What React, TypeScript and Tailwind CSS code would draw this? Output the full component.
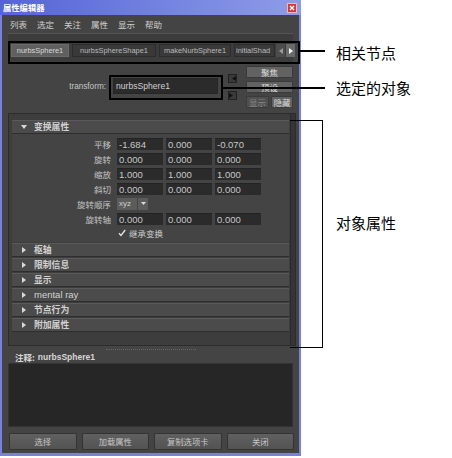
import React from 'react';

const cjk = '"Noto Sans CJK SC", "Liberation Sans", sans-serif';
const latin = '"Liberation Sans", "Noto Sans CJK SC", sans-serif';

const menus = ['列表', '选定', '关注', '属性', '显示', '帮助'];
const tabs = ['nurbsSphere1', 'nurbsSphereShape1', 'makeNurbSphere1', 'initialShad'];

const rows: { label: string; values: string[] }[] = [
  { label: '平移', values: ['-1.684', '0.000', '-0.070'] },
  { label: '旋转', values: ['0.000', '0.000', '0.000'] },
  { label: '缩放', values: ['1.000', '1.000', '1.000'] },
  { label: '斜切', values: ['0.000', '0.000', '0.000'] },
];

const sections = ['枢轴', '限制信息', '显示', 'mental ray', '节点行为', '附加属性'];
const footerButtons = ['选择', '加载属性', '复制选项卡', '关闭'];

function Field({ value }: { value: string }) {
  return (
    <div className="w-[46px] h-[12px] bg-[#2b2b2b] border-t border-[#232323] text-[9.5px] leading-[12px] text-[#c8c8c8] pl-[2px]">
      {value}
    </div>
  );
}

function Label({ text }: { text: string }) {
  return <div className="w-[99px] text-right text-[8.5px] leading-[12px] text-[#c4c4c4]">{text}</div>;
}

function SectionHeader({ title, open, latinText }: { title: string; open?: boolean; latinText?: boolean }) {
  return (
    <div className="h-[14px] flex items-center bg-[#4b4b4b] border-t border-[#5a5a5a] border-b border-b-[#2e2e2e]">
      <div className="w-[22px] flex justify-center pl-[2px]">
        {open ? (
          <svg width="6" height="5" viewBox="0 0 6 5"><path d="M0 0h6L3 4z" fill="#d8d8d8" /></svg>
        ) : (
          <svg width="5" height="6" viewBox="0 0 5 6"><path d="M0 0v6l4-3z" fill="#d8d8d8" /></svg>
        )}
      </div>
      {latinText ? (
        <span className="text-[9.5px] text-[#d2d2d2] leading-none" style={{ fontFamily: latin }}>{title}</span>
      ) : (
        <span className="text-[8.8px] font-bold text-[#d2d2d2] leading-none">{title}</span>
      )}
    </div>
  );
}

function SmallBtn({ text, disabled, className = '' }: { text: string; disabled?: boolean; className?: string }) {
  return (
    <div
      className={`h-[12px] flex items-center justify-center rounded-[1px] border border-[#3a3a3a] text-[8.5px] leading-none ${
        disabled ? 'text-[#858585] bg-[#505050]' : 'text-[#dadada] bg-[#626262]'
      } ${className}`}
    >
      {text}
    </div>
  );
}

export default function App() {
  return (
    <div className="relative w-[452px] h-[458px] bg-white overflow-hidden" style={{ fontFamily: cjk }}>
      {/* window */}
      <div className="w-[301px] h-[456px] flex flex-col bg-[#7880e2]">
        {/* title bar */}
        <div className="h-[15px] flex items-center justify-between bg-gradient-to-r from-[#5663d6] to-[#8e9ce8] pl-[3px] pr-[4px]">
          <span className="text-[8.3px] font-bold text-white leading-none">属性编辑器</span>
          <div className="w-[10px] h-[10px] bg-[#d23a3a] border border-[#f2b8b8] flex items-center justify-center">
            <svg width="6" height="6" viewBox="0 0 6 6"><path d="M1 1l4 4M5 1l-4 4" stroke="white" strokeWidth="1.4" /></svg>
          </div>
        </div>

        {/* body */}
        <div className="flex-1 flex flex-col bg-[#444444] ml-[2px] mr-[2px] mb-[3px]">
          {/* menu */}
          <div className="h-[18px] flex items-center gap-[10px] pl-[8px] text-[8.5px] text-[#cfcfcf]">
            {menus.map(m => (
              <span key={m} className="w-[17px]">{m}</span>
            ))}
          </div>

          {/* tabs */}
          <div className="h-[30px] mx-[6px] bg-[#3c3c3c] border-t border-[#555] flex items-start pt-[10px] pl-[3px]">
            <div className="flex items-center h-[13px] gap-[3px]" style={{ fontFamily: latin }}>
              {tabs.map((t, i) => (
                <div
                  key={t}
                  className={`h-[13px] flex items-center text-[7.4px] leading-none border ${
                    i === 0
                      ? 'bg-[#606060] border-[#6a6a6a] text-[#d8d8d8] w-[58px] justify-center'
                      : 'bg-[#393939] border-[#2c2c2c] text-[#bcbcbc] justify-center'
                  } ${i === 1 ? 'w-[84px]' : ''} ${i === 2 ? 'w-[72px]' : ''} ${i === 3 ? 'w-[41px] overflow-hidden justify-start pl-[1px]' : ''}`}
                >
                  {t}
                </div>
              ))}
              <div className="flex gap-[1px] -ml-[2px]">
                <div className="w-[9px] h-[13px] bg-[#4c4c4c] flex items-center justify-center">
                  <svg width="4" height="6" viewBox="0 0 4 6"><path d="M4 0v6L0 3z" fill="#9a9a9a" /></svg>
                </div>
                <div className="w-[9px] h-[13px] bg-[#6a6a6a] flex items-center justify-center">
                  <svg width="4" height="6" viewBox="0 0 4 6"><path d="M0 0v6l4-3z" fill="#f4f4f4" /></svg>
                </div>
              </div>
            </div>
          </div>

          {/* transform row */}
          <div className="h-[50px] flex">
            <div className="w-[104px] pt-[20px] text-right text-[8.2px] text-[#c4c4c4] leading-none" style={{ fontFamily: latin }}>
              transform:
            </div>
            <div className="ml-[7px] mt-[15px] w-[105px] h-[16px] bg-[#2b2b2b] border border-[#262626] text-[8.6px] text-[#d0d0d0] leading-[14px] pl-[2px]" style={{ fontFamily: latin }}>
              nurbsSphere1
            </div>
            <div className="ml-[10px] pt-[11px] flex flex-col gap-[8px]">
              <div className="w-[9px] h-[9px] bg-[#3a3a3a] border border-[#222] flex items-center justify-end">
                <svg width="5" height="5" viewBox="0 0 5 5"><path d="M5 0v5L1 2.5z" fill="#111" /></svg>
              </div>
              <div className="w-[9px] h-[9px] bg-[#3a3a3a] border border-[#222] flex items-center">
                <svg width="5" height="5" viewBox="0 0 5 5"><path d="M0 0v5l4-2.5z" fill="#111" /></svg>
              </div>
            </div>
            <div className="ml-[9px] pt-[3px] w-[47px] flex flex-col gap-[3px]">
              <SmallBtn text="聚焦" />
              <SmallBtn text="预设" />
              <div className="flex gap-[2px]">
                <SmallBtn text="显示" disabled className="w-[23px]" />
                <SmallBtn text="隐藏" className="w-[22px]" />
              </div>
            </div>
          </div>

          {/* attribute area */}
          <div className="h-[233px] ml-[6px] mr-[3px] border border-[#2c2c2c] bg-[#3d3d3d] flex">
            <div className="flex-1 pl-[3px] pr-[1px] pt-[6px] flex flex-col">
              <SectionHeader title="变换属性" open />
              <div className="bg-[#444] flex flex-col gap-[3px] pt-[4px] pb-[4px]">
                {rows.map(r => (
                  <div key={r.label} className="flex items-center gap-[6px]">
                    <Label text={r.label} />
                    <div className="flex gap-[3px]" style={{ fontFamily: latin }}>
                      {r.values.map((v, i) => (
                        <Field key={i} value={v} />
                      ))}
                    </div>
                  </div>
                ))}
                <div className="flex items-center gap-[6px]">
                  <Label text="旋转顺序" />
                  <div className="flex h-[12px]" style={{ fontFamily: latin }}>
                    <div className="w-[20px] bg-[#5c5c5c] text-[8px] leading-[12px] text-[#d0d0d0] pl-[2px]">xyz</div>
                    <div className="w-[10px] ml-[1px] bg-[#5c5c5c] flex items-center justify-center">
                      <svg width="5" height="4" viewBox="0 0 5 4"><path d="M0 0h5L2.5 3z" fill="#ddd" /></svg>
                    </div>
                  </div>
                </div>
                <div className="flex items-center gap-[6px]">
                  <Label text="旋转轴" />
                  <div className="flex gap-[3px]" style={{ fontFamily: latin }}>
                    <Field value="0.000" />
                    <Field value="0.000" />
                    <Field value="0.000" />
                  </div>
                </div>
                <div className="flex items-center h-[10px] pl-[106px] gap-[3px]">
                  <div className="w-[8px] h-[8px] flex items-center justify-center">
                    <svg width="8" height="8" viewBox="0 0 8 8"><path d="M1 4.2l2 2.2L7.2 1" stroke="#e6e6e6" strokeWidth="1.3" fill="none" /></svg>
                  </div>
                  <span className="text-[8.5px] text-[#d0d0d0] leading-none">继承变换</span>
                </div>
              </div>
              <div className="flex flex-col gap-[1px] mt-[1px]">
                {sections.map(s => (
                  <SectionHeader key={s} title={s} latinText={s === 'mental ray'} />
                ))}
              </div>
            </div>
            <div className="w-[5px] bg-[#353535] border-l border-[#2a2a2a]" />
          </div>

          {/* divider */}
          <div className="h-[6px] flex items-center justify-center">
            <div className="w-[90px] border-t border-dotted border-[#666]" />
          </div>

          {/* note */}
          <div className="h-[11px] pl-[13px] flex items-center text-[8.5px] font-bold text-[#d6d6d6] leading-none">
            注释: <span className="ml-[3px]" style={{ fontFamily: latin }}>nurbsSphere1</span>
          </div>
          <div className="h-[64px] mx-[6px] bg-[#262626] border border-[#333]" />

          {/* footer buttons */}
          <div className="flex-1 flex items-start gap-[5px] pl-[7px] pr-[5px] pt-[6px]">
            {footerButtons.map(b => (
              <div
                key={b}
                className="flex-1 h-[17px] flex items-center justify-center bg-gradient-to-b from-[#606060] to-[#535353] border border-[#333] rounded-[1px] text-[8.3px] text-[#c8c8c8]"
              >
                {b}
              </div>
            ))}
          </div>
        </div>
      </div>

      {/* annotations */}
      <div className="absolute left-[8px] top-[41px] w-[292px] h-[23px] border-2 border-black" />
      <div className="absolute left-[300px] top-[50px] w-[25px] h-[1.5px] bg-black" />
      <div className="absolute left-[336px] top-[42px] text-[15px] text-black leading-[22px]">相关节点</div>

      <div className="absolute left-[109px] top-[75px] w-[114px] h-[25px] border-2 border-black" />
      <div className="absolute left-[223px] top-[87px] w-[102px] h-[1.5px] bg-black" />
      <div className="absolute left-[336px] top-[77px] text-[15px] text-black leading-[22px]">选定的对象</div>

      <div className="absolute left-[290px] top-[120px] w-[33px] h-[228px] border-t-[1.5px] border-r-[1.5px] border-b-[1.5px] border-black" />
      <div className="absolute left-[336px] top-[212px] text-[15px] text-black leading-[22px]">对象属性</div>
    </div>
  );
}
